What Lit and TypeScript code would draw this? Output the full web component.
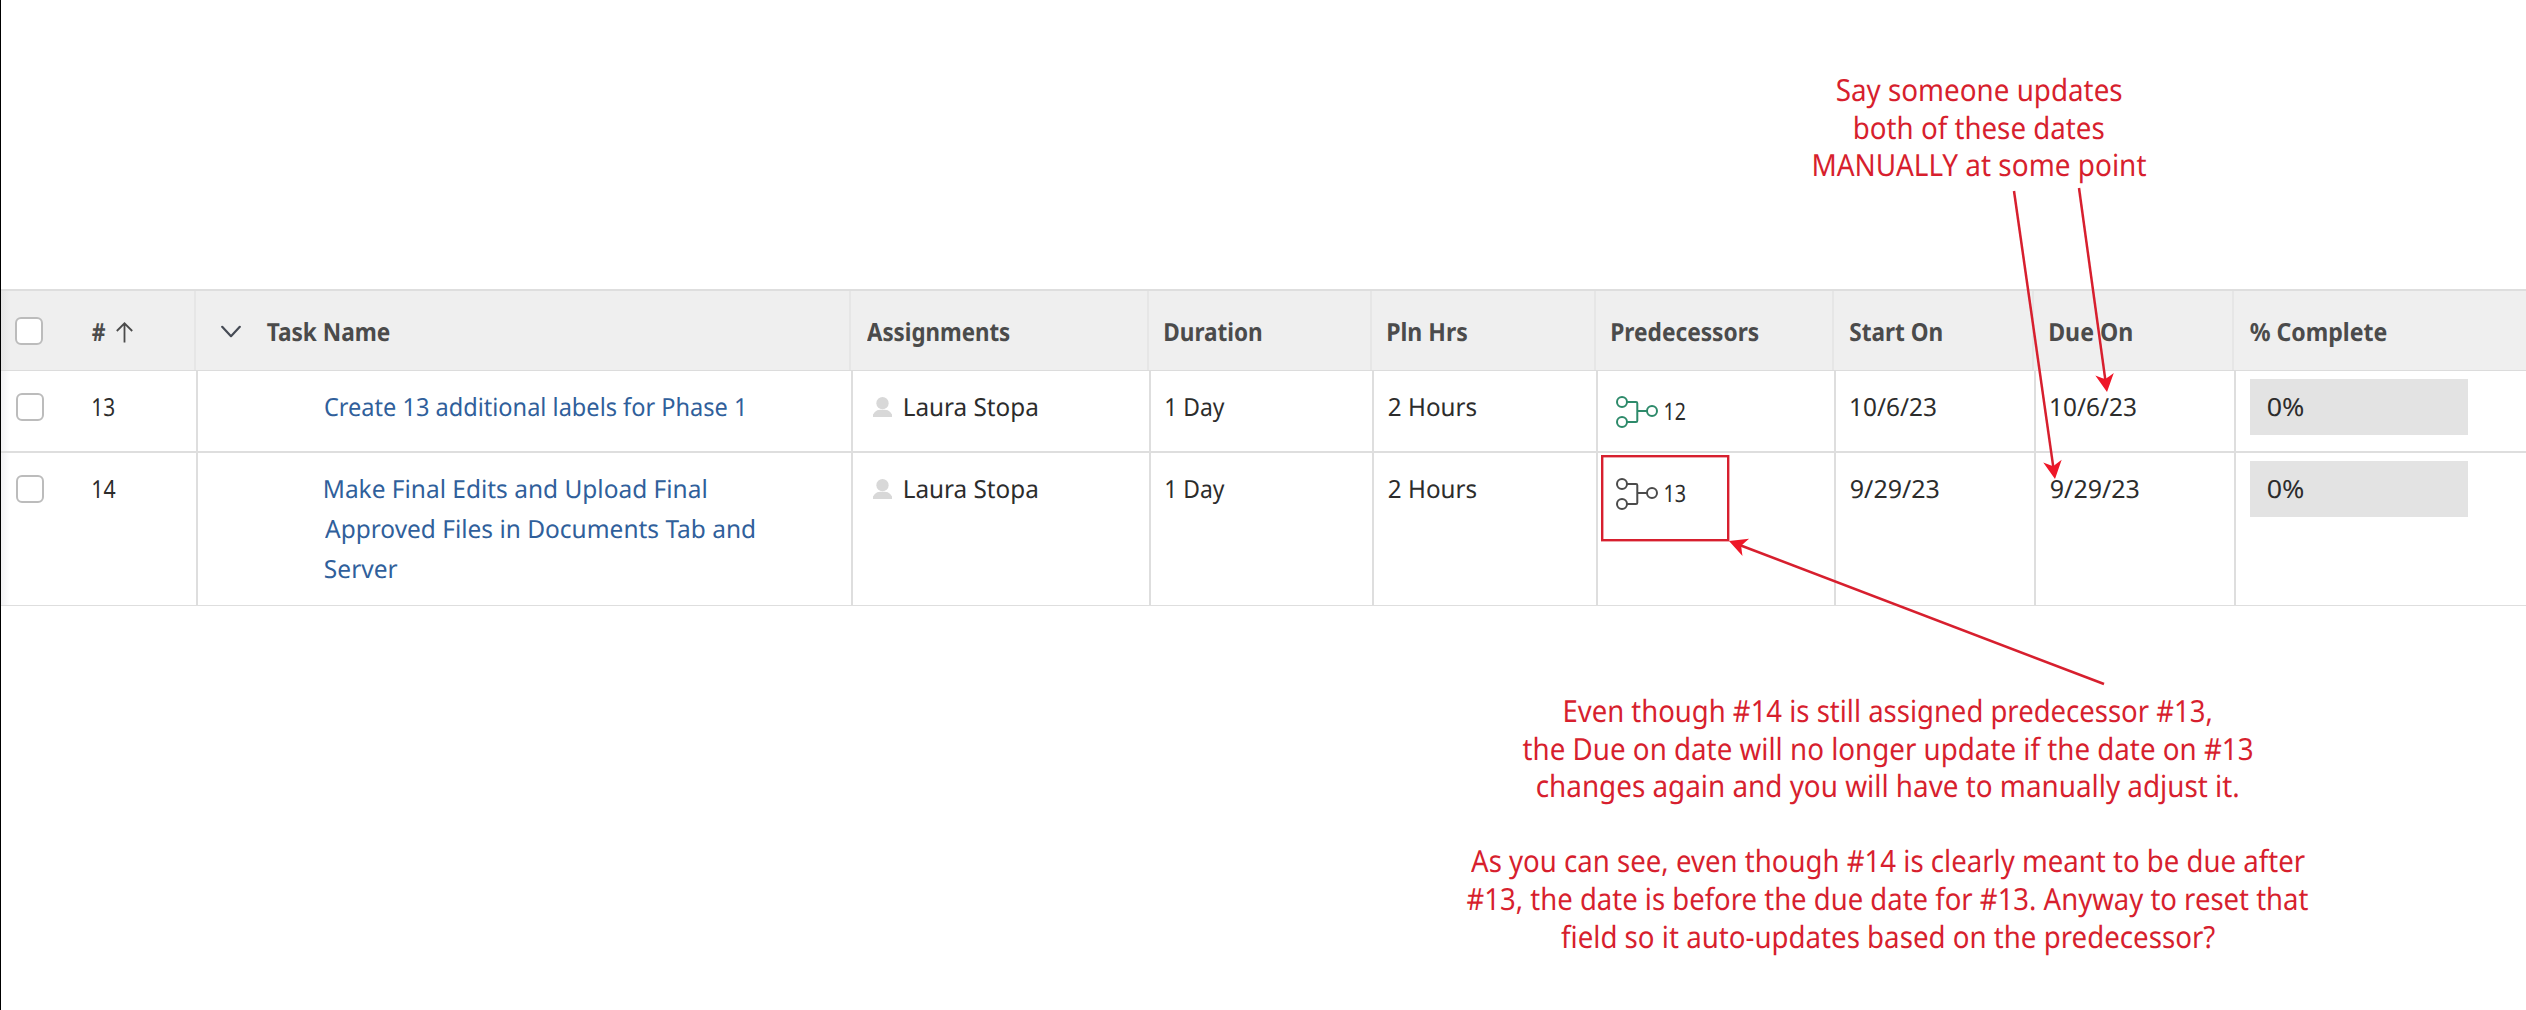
import { css, html, LitElement, svg } from 'lit';
import { customElement, property } from 'lit/decorators.js';

interface Label {
    text: string;
    width: number;
}

interface Task {
    id: Label;
    name: Label[];
    owner: Label;
    duration: Label;
    hours: Label;
    predecessor: Label;
    ready: boolean;
    start: Label;
    due: Label;
    complete: Label;
}

const HEADERS: Label[] = [
    { text: 'Assignments', width: 142.5 },
    { text: 'Duration', width: 96.5 },
    { text: 'Pln Hrs', width: 79 },
    { text: 'Predecessors', width: 146.5 },
    { text: 'Start On', width: 92 },
    { text: 'Due On', width: 82 },
    { text: '% Complete', width: 136.5 },
];

const TASKS: Task[] = [
    {
        id: { text: '13', width: 21 },
        name: [{ text: 'Create 13 additional labels for Phase 1', width: 417.5 }],
        owner: { text: 'Laura Stopa', width: 132 },
        duration: { text: '1 Day', width: 58.5 },
        hours: { text: '2 Hours', width: 87 },
        predecessor: { text: '12', width: 20 },
        ready: true,
        start: { text: '10/6/23', width: 84.5 },
        due: { text: '10/6/23', width: 84.5 },
        complete: { text: '0%', width: 35.5 },
    },
    {
        id: { text: '14', width: 22.5 },
        name: [
            { text: 'Make Final Edits and Upload Final', width: 381 },
            { text: 'Approved Files in Documents Tab and', width: 429 },
            { text: 'Server', width: 72.5 },
        ],
        owner: { text: 'Laura Stopa', width: 132 },
        duration: { text: '1 Day', width: 58.5 },
        hours: { text: '2 Hours', width: 87 },
        predecessor: { text: '13', width: 20 },
        ready: false,
        start: { text: '9/29/23', width: 87.5 },
        due: { text: '9/29/23', width: 87.5 },
        complete: { text: '0%', width: 35.5 },
    },
];

const NOTE_TOP: Label[] = [
    { text: 'Say someone updates', width: 284.5 },
    { text: 'both of these dates', width: 248.5 },
    { text: 'MANUALLY at some point', width: 332 },
];

const NOTE_BOTTOM: Label[][] = [
    [
        { text: 'Even though #14 is still assigned predecessor #13,', width: 646 },
        { text: 'the Due on date will no longer update if the date on #13', width: 729 },
        { text: 'changes again and you will have to manually adjust it.', width: 701 },
    ],
    [
        { text: 'As you can see, even though #14 is clearly meant to be due after', width: 834 },
        { text: '#13, the date is before the due date for #13. Anyway to reset that', width: 841 },
        { text: 'field so it auto-updates based on the predecessor?', width: 654 },
    ],
];

// One line of text, condensed so that its ink fills the given width.
@customElement('fit-text')
export class FitText extends LitElement {

    @property({ type: String })
    text: string = '';
    @property({ type: Number })
    width: number = 0;

    static styles = css`
            :host {
                display: block;
                flex: none;
            }
            .line {
                display: inline-block;
                white-space: nowrap;
                transform-origin: 0 50%;
            }
    `;

    updated() {
        const line = this.renderRoot.querySelector('.line') as HTMLElement;
        line.style.transform = 'none';
        const style = getComputedStyle(line);
        const ctx = document.createElement('canvas').getContext('2d')!;
        // canvas metrics are rounded to whole pixels, so measure large
        ctx.font = `${style.fontWeight} 400px ${style.fontFamily}`;
        const ink = ctx.measureText(this.text);
        const unit = line.getBoundingClientRect().width / ink.width;
        const left = ink.actualBoundingBoxLeft * unit;
        const right = ink.actualBoundingBoxRight * unit;
        const scale = this.width / (left + right);
        this.style.width = `${this.width}px`;
        line.style.transform = `translateX(${left * scale}px) scaleX(${scale})`;
    }

    render() {
        return html`<span class="line">${this.text}</span>`;
    }
}

@customElement('app-root')
export class AppRoot extends LitElement {

    static styles = css`
            :host {
                display: block;
                position: relative;
                box-sizing: border-box;
                width: 2526px;
                height: 1010px;
                overflow: hidden;
                padding-top: 289px;
                border-left: 1px solid #000;
                background: #fff;
                font-family: "Noto Sans", "Open Sans", sans-serif;
                font-size: 25px;
                line-height: 40px;
                text-rendering: geometricPrecision;
                color: #2c2c2c;
            }
            svg {
                display: block;
                flex: none;
            }
            .row {
                display: grid;
                grid-template-columns: 195px 655px 298px 223px 224px 238px 200px 200px 1fr;
                box-sizing: border-box;
                background: linear-gradient(to right, #f1f1f3, #fff 9px);
            }
            .head {
                grid-template-columns: 193px 655px 298px 223px 224px 238px 200px 200px 1fr;
                height: 82px;
                border-top: 2px solid #dedede;
                border-bottom: 1px solid #dcdcdc;
                background: linear-gradient(to right, #e6e6e6, #efefef 9px);
                color: #4b4b4b;
                font-weight: 700;
            }
            .first {
                height: 82px;
                border-bottom: 2px solid #dedede;
            }
            .last {
                height: 153px;
                border-bottom: 1px solid #dedede;
            }
            .cell {
                display: flex;
                align-items: flex-start;
                padding: 16px 0 0 15px;
                border-left: 2px solid #dedede;
            }
            .head .cell {
                padding: 21px 0 0 15.5px;
                border-left-color: #e6e6e6;
            }
            .row .pick {
                padding: 16px 0 0 15px;
                border-left: 0;
                gap: 48.8px;
            }
            .head .pick {
                padding: 21px 0 0 14px;
                gap: 49px;
            }
            .box {
                box-sizing: border-box;
                width: 28px;
                height: 28px;
                margin-top: 6px;
                border: 2px solid #bcbcbc;
                border-radius: 6px;
                background: #fff;
            }
            .head .box {
                margin-top: 5px;
            }
            .sort {
                margin: 10px 0 0 -38px;
            }
            .head .name {
                padding-left: 25px;
                gap: 26px;
            }
            .chevron {
                margin-top: 13px;
            }
            .row .title {
                flex-direction: column;
                padding-left: 127px;
                color: #305f9b;
            }
            .row .owner {
                padding-left: 20px;
                gap: 13px;
            }
            .person {
                margin-top: 10px;
            }
            .row .pred {
                padding-left: 18px;
                gap: 7px;
            }
            .graph {
                margin-top: 9px;
            }
            .count {
                margin-top: 4.5px;
                font-size: 24px;
            }
            .row .done {
                padding: 8px 0 0 14px;
            }
            .bar {
                box-sizing: border-box;
                width: 218px;
                height: 56px;
                padding: 8px 0 0 17.5px;
                background: #e3e3e3;
            }
            .note {
                position: absolute;
                display: flex;
                flex-direction: column;
                align-items: center;
                color: #d71f2e;
                font-size: 30.5px;
                line-height: 37.6px;
            }
            .note-top {
                left: 1812.5px;
                top: 71px;
            }
            .note-bottom {
                left: 1466px;
                top: 692px;
                gap: 37.6px;
            }
            .group {
                display: flex;
                flex-direction: column;
                align-items: center;
            }
            .marks {
                position: absolute;
                left: -1px;
                top: 0;
            }
    `;

    label(item: Label, cls = '') {
        return html`<fit-text class="${cls}" .text=${item.text} .width=${item.width}></fit-text>`;
    }

    arrow(x1: number, y1: number, x2: number, y2: number) {
        const length = Math.hypot(x2 - x1, y2 - y1);
        const angle = Math.atan2(y2 - y1, x2 - x1) * 180 / Math.PI;
        return svg`
          <g transform="translate(${x2} ${y2}) rotate(${angle})">
            <path d="M${-length} 0H-12" stroke="#d71f2e" stroke-width="2.5"/>
            <path d="M0 0L-18 -9.3Q-15 -4 -13 0Q-15 4 -18 9.3Z" fill="#ee1728"/>
          </g>`;
    }

    head() {
        return html`
          <div class="row head">
            <div class="cell pick">
              <div class="box"></div>
              ${this.label({ text: '#', width: 13 })}
              <svg class="sort" width="17" height="21" viewBox="0 0 17 21" fill="none" stroke="#4b4b4b" stroke-width="1.8">
                <path d="M8.5 20.5V1.5M0.8 9L8.5 1.3L16.2 9"/>
              </svg>
            </div>
            <div class="cell name">
              <svg class="chevron" width="20" height="14" viewBox="0 0 20 14" fill="none" stroke="#464b55" stroke-width="2.2" stroke-linecap="round" stroke-linejoin="round">
                <path d="M1.2 1.8L10 11.2L18.8 1.8"/>
              </svg>
              ${this.label({ text: 'Task Name', width: 122.5 })}
            </div>
            ${HEADERS.map((item) => html`<div class="cell">${this.label(item)}</div>`)}
          </div>`;
    }

    task(task: Task, index: number) {
        return html`
          <div class="row ${index === 0 ? 'first' : 'last'}">
            <div class="cell pick">
              <div class="box"></div>
              ${this.label(task.id)}
            </div>
            <div class="cell title">${task.name.map((item) => this.label(item))}</div>
            <div class="cell owner">
              <svg class="person" width="19" height="20" viewBox="0 0 18 20" preserveAspectRatio="none" fill="#d8d8d8">
                <ellipse cx="9" cy="6.2" rx="5.8" ry="6.2"/>
                <path d="M0 20V17.6Q0.3 15.5 4 13.3Q6 12.4 9 12.9Q12 12.4 14 13.3Q17.7 15.5 18 17.6V20Z"/>
              </svg>
              ${this.label(task.owner)}
            </div>
            <div class="cell">${this.label(task.duration)}</div>
            <div class="cell">${this.label(task.hours)}</div>
            <div class="cell pred">
              <svg class="graph" width="42" height="32" viewBox="0 0 42 32" fill="none" stroke="${task.ready ? '#2d8a6a' : '#4b4b4b'}" stroke-width="2">
                <circle cx="6" cy="6" r="5"/>
                <circle cx="6" cy="26" r="5"/>
                <circle cx="36" cy="15" r="5"/>
                <path d="M11 6H20Q21.3 6 21.3 7.3V24.7Q21.3 26 20 26H11M21.3 15H31"/>
              </svg>
              ${this.label(task.predecessor, 'count')}
            </div>
            <div class="cell">${this.label(task.start)}</div>
            <div class="cell">${this.label(task.due)}</div>
            <div class="cell done">
              <div class="bar">${this.label(task.complete)}</div>
            </div>
          </div>`;
    }

    render() {
        return html`
          ${this.head()}
          ${TASKS.map((task, index) => this.task(task, index))}
          <div class="note note-top">${NOTE_TOP.map((item) => this.label(item))}</div>
          <div class="note note-bottom">
            ${NOTE_BOTTOM.map((group) => html`<div class="group">${group.map((item) => this.label(item))}</div>`)}
          </div>
          <svg class="marks" width="2526" height="1010" viewBox="0 0 2526 1010">
            <rect x="1602.2" y="456.2" width="126" height="84" fill="none" stroke="#d71f2e" stroke-width="2.4"/>
            ${this.arrow(2014, 191, 2055, 479)}
            ${this.arrow(2079, 188, 2107, 392)}
            ${this.arrow(2104, 684, 1729, 541)}
          </svg>`;
    }
}
